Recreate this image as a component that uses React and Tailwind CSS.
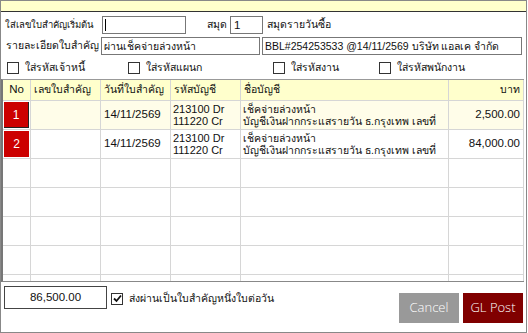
import { useState } from 'react';

const rows = [
  { no: 1, date: '14/11/2569', dr: '213100 Dr', cr: '111220 Cr', n1: 'เช็คจ่ายล่วงหน้า', n2: 'บัญชีเงินฝากกระแสรายวัน ธ.กรุงเทพ เลขที่', amt: '2,500.00' },
  { no: 2, date: '14/11/2569', dr: '213100 Dr', cr: '111220 Cr', n1: 'เช็คจ่ายล่วงหน้า', n2: 'บัญชีเงินฝากกระแสรายวัน ธ.กรุงเทพ เลขที่', amt: '84,000.00' },
];

const cols = 'grid grid-cols-[28px_70px_70px_70px_208px_1fr]';
const cell = 'border-r border-b border-[#d6d6d6]';

function Check({ label, checked }) {
  return (
    <label className="flex items-center gap-[6px] whitespace-nowrap">
      <span className="w-[12px] h-[12px] border border-[#333] bg-white flex items-center justify-center shrink-0">
        {checked && (
          <svg width="9" height="9" viewBox="0 0 9 9">
            <path d="M1 4.5 L3.5 7 L8 1.5" stroke="#111" strokeWidth="1.8" fill="none" />
          </svg>
        )}
      </span>
      <span>{label}</span>
    </label>
  );
}

export default function App() {
  const [start, setStart] = useState('');

  return (
    <div className="w-[528px] h-[333px] bg-white text-[10.5px] text-[#111] whitespace-nowrap" style={{ fontFamily: '"Liberation Sans", "Noto Sans", sans-serif' }}>
      <div className="w-[527px] h-[333px] border border-[#888] flex flex-col">
        <div className="h-[11px] bg-[#ffffcc] border-b border-[#333] shrink-0" />

        <div className="flex items-center h-[20px] mt-[3px] pl-[4px]">
          <span className="w-[97px] text-[9.5px]">ใส่เลขใบสำคัญเริ่มต้น</span>
          <div className="relative">
            <input value={start} onChange={(e) => setStart(e.target.value)} className="w-[84px] h-[18px] border border-[#777] px-[2px] outline-none" />
            <span className="absolute left-[3px] top-[3px] w-[1px] h-[12px] bg-black" />
          </div>
          <span className="ml-[21px] w-[23px]">สมุด</span>
          <input defaultValue="1" className="w-[33px] h-[18px] border border-[#777] px-[3px] outline-none text-[11.5px]" />
          <span className="ml-[4px]">สมุดรายวันซื้อ</span>
        </div>

        <div className="flex items-center h-[20px] mt-[1px]">
          <span className="w-[100px] text-right pr-[2px]">รายละเอียดใบสำคัญ</span>
          <input defaultValue="ผ่านเช็คจ่ายล่วงหน้า" className="w-[159px] h-[18px] border border-[#777] px-[2px] outline-none" />
          <input defaultValue="BBL#254253533 @14/11/2569 บริษัท แอลเค จำกัด" className="ml-[2px] w-[260px] h-[18px] border border-[#777] px-[2px] outline-none" />
        </div>

        <div className="flex items-center h-[14px] mt-[5px] pl-[6px]">
          <div className="w-[121px]"><Check label="ใส่รหัสเจ้าหนี้" /></div>
          <div className="w-[145px]"><Check label="ใส่รหัสแผนก" /></div>
          <div className="w-[106px]"><Check label="ใส่รหัสงาน" /></div>
          <Check label="ใส่รหัสพนักงาน" />
        </div>

        <div className="mt-[4px] h-[203px] border-t border-[#999] border-l-[2px] border-l-[#777] border-b border-b-[#888] overflow-hidden shrink-0 mr-[2px]">
          <div className={`${cols} h-[21px] bg-[#ffffcc]`}>
            <div className={`${cell} flex items-center justify-center text-[11.5px]`}>No</div>
            <div className={`${cell} flex items-center pl-[3px]`}>เลขใบสำคัญ</div>
            <div className={`${cell} flex items-center pl-[3px]`}>วันที่ใบสำคัญ</div>
            <div className={`${cell} flex items-center pl-[3px]`}>รหัสบัญชี</div>
            <div className={`${cell} flex items-center pl-[3px]`}>ชื่อบัญชี</div>
            <div className={`${cell} flex items-center justify-end pr-[3px]`}>บาท</div>
          </div>
          {rows.map((r, i) => (
            <div key={r.no} className={`${cols} h-[29px] ${i === 0 ? 'bg-[#fffde9]' : 'bg-white'}`}>
              <div className={`${cell} p-[1px] bg-white`}>
                <div className={`h-full bg-[#cc0000] text-white flex items-center justify-center text-[12px] ${i === 0 ? 'border-r border-b border-[#222]' : ''}`}>{r.no}</div>
              </div>
              <div className={cell} />
              <div className={`${cell} flex items-center pl-[3px] text-[11.5px]`}>{r.date}</div>
              <div className={`${cell} flex flex-col justify-center pl-[2px] text-[11px] leading-[12px]`}>
                <span>{r.dr}</span>
                <span>{r.cr}</span>
              </div>
              <div className={`${cell} flex flex-col justify-center pl-[2px] leading-[12px] overflow-hidden`}>
                <span>{r.n1}</span>
                <span>{r.n2}</span>
              </div>
              <div className={`${cell} flex items-center justify-end pr-[3px] text-[11.5px]`}>{r.amt}</div>
            </div>
          ))}
          {[0, 1, 2, 3, 4].map((k) => (
            <div key={k} className={`${cols} h-[29px]`}>
              <div className={cell} />
              <div className={cell} />
              <div className={cell} />
              <div className={cell} />
              <div className={cell} />
              <div className={cell} />
            </div>
          ))}
        </div>

        <div className="flex items-start pl-[3px] pr-[3px] mt-[4px]">
          <div className="w-[103px] h-[23px] border border-[#444] flex items-center justify-center text-[11.5px]">86,500.00</div>
          <div className="ml-[4px] mt-[5px]"><Check label="ส่งผ่านเป็นใบสำคัญหนึ่งใบต่อวัน" checked /></div>
          <div className="ml-auto mt-[7px] flex gap-[4px]" style={{ fontFamily: '"Open Sans", sans-serif' }}>
            <button className="w-[60px] h-[30px] bg-[#999] text-white text-[13px] font-light">Cancel</button>
            <button className="w-[60px] h-[30px] bg-[#800000] text-white text-[13px] font-light">GL Post</button>
          </div>
        </div>
      </div>
    </div>
  );
}
